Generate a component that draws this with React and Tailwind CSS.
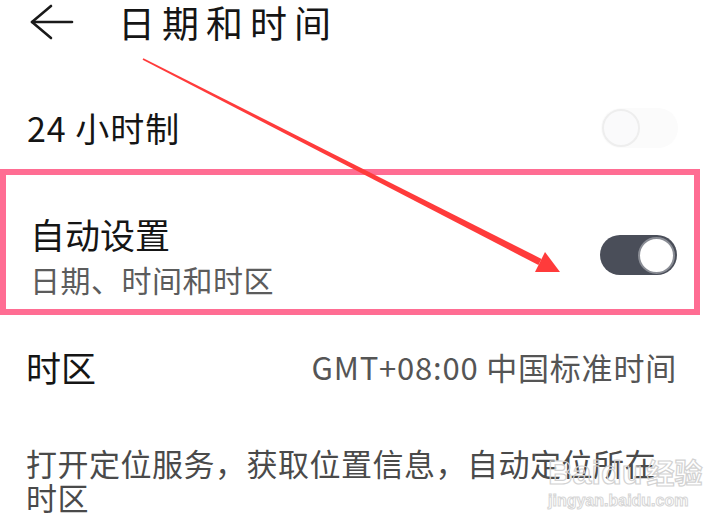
import React from "react";

function Toggle({ on }) {
  if (on) {
    return (
      <div className="w-[77px] h-[40px] rounded-full bg-[#4a4e59] flex items-center justify-end pr-[2px] shrink-0">
        <div className="w-[37px] h-[37px] rounded-full bg-white border-[2px] border-[#8a8d95]" />
      </div>
    );
  }
  return (
    <div className="w-[77px] h-[40px] rounded-full bg-[#fbfbfb] flex items-center justify-start pl-[1px] shrink-0">
      <div className="w-[38px] h-[38px] rounded-full bg-[#fafafb] border-[2px] border-[#eeeeee]" />
    </div>
  );
}

export default function App() {
  return (
    <div
      className="relative w-[710px] h-[520px] overflow-hidden bg-white"
      style={{ fontFamily: '"Noto Sans CJK SC", "Noto Sans", sans-serif' }}
    >
      <div className="flex flex-col">
        {/* header */}
        <div className="h-[44px] flex items-center">
          <svg width="46" height="40" viewBox="0 0 46 40" className="ml-[28px] shrink-0" fill="none" stroke="#1a1a1a" strokeWidth="2.6" strokeLinecap="round" strokeLinejoin="round">
            <path d="M23 4 L4 20 L23 36" />
            <path d="M4 20 L44 20" />
          </svg>
          <div className="ml-[44px] text-[37px] leading-[44px] tracking-[7px] text-[#151515] whitespace-nowrap">日期和时间</div>
        </div>

        {/* 24 hour */}
        <div className="mt-[64px] h-[40px] flex items-center justify-between pl-[27px] pr-[32px]">
          <div className="text-[34px] leading-[40px] tracking-[1px] text-[#151515] whitespace-nowrap">24 小时制</div>
          <Toggle on={false} />
        </div>

        {/* highlighted box */}
        <div className="mt-[21px] h-[146px] border-[6px] border-[#ff6d93] mr-[10px] flex items-center justify-between pl-[24px] pr-[17px] pt-[26px]">
          <div className="flex flex-col">
            <div className="text-[35px] leading-[40px] text-[#151515] whitespace-nowrap">自动设置</div>
            <div className="mt-[8px] text-[30px] leading-[34px] tracking-[0.5px] text-[#5c5c5c] whitespace-nowrap">日期、时间和时区</div>
          </div>
          <Toggle on={true} />
        </div>

        {/* time zone */}
        <div className="mt-[32px] h-[40px] flex items-center justify-between pl-[26px] pr-[33px]">
          <div className="text-[35px] leading-[40px] text-[#151515] whitespace-nowrap">时区</div>
          <div className="text-[31px] leading-[40px] tracking-[0.8px] text-[#555555] whitespace-nowrap">GMT+08:00 中国标准时间</div>
        </div>

        {/* description */}
        <div className="mt-[59px] pl-[26px] text-[31px] leading-[34px] tracking-[0.5px] text-[#4a4a4a] whitespace-nowrap">
          打开定位服务，获取位置信息，自动定位所在
          <br />
          时区
        </div>
      </div>

      {/* watermark */}
      <div className="absolute left-[548px] top-[454px] flex flex-col items-start pointer-events-none whitespace-nowrap">
        <div
          className="text-[34px] leading-[36px] font-bold text-transparent [-webkit-text-stroke:1.2px_#d2d2d2] whitespace-nowrap"
          style={{ fontFamily: '"Liberation Sans", "Noto Sans CJK SC", sans-serif' }}
        >
          Baidu<span className="text-[28px] ml-[4px]">经验</span>
        </div>
        <div
          className="-mt-[1px] text-[16px] leading-[18px] font-bold text-transparent [-webkit-text-stroke:1px_#d6d6d6] whitespace-nowrap"
          style={{ fontFamily: '"Liberation Sans", sans-serif' }}
        >
          jingyan.baidu.com
        </div>
      </div>

      {/* red arrow */}
      <svg className="absolute left-0 top-0 pointer-events-none" width="710" height="520" viewBox="0 0 710 520">
        <polygon
          fill="#ff3b3b"
          points="142.6,59.7 143.4,58.3 541.6,258.9 538.4,265.1"
        />
        <polygon fill="#ff3b3b" points="545,252 535,272 560,272" />
      </svg>
    </div>
  );
}
